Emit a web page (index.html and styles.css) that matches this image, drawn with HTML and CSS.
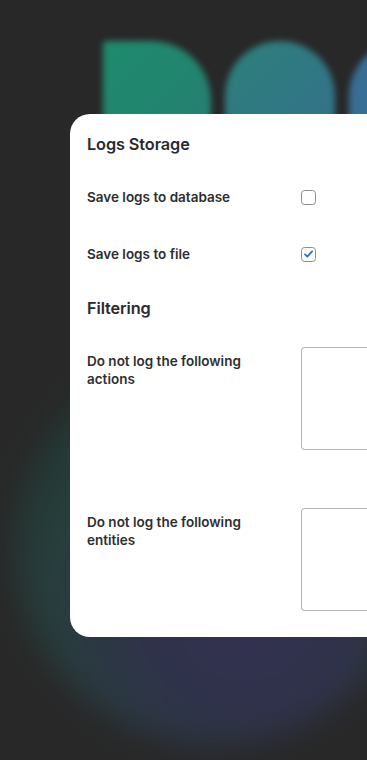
FILE: index.html
```html
<!DOCTYPE html>
<html>
<head>
<meta charset="utf-8">
<link rel="stylesheet" href="styles.css">
</head>
<body>
<div class="bg">
  <div class="shape shape-d"></div>
  <div class="shape shape-c1"></div>
  <div class="shape shape-c2"></div>
  <div class="glow"></div>
</div>
<main class="page">
  <section class="card">
    <h2 class="title">Logs Storage</h2>
    <div class="row row-check first">
      <label class="label">Save logs to database</label>
      <span class="checkbox"></span>
    </div>
    <div class="row row-check second">
      <label class="label">Save logs to file</label>
      <span class="checkbox checked">
        <svg viewBox="0 0 14 14" width="14" height="14"><path d="M3.3 7.4 L5.8 9.8 L10.8 4.2" fill="none" stroke="#2f74c6" stroke-width="2" stroke-linecap="round" stroke-linejoin="round"/></svg>
      </span>
    </div>
    <h2 class="title filtering">Filtering</h2>
    <div class="row row-area first-area">
      <label class="label multi">Do not log the following actions</label>
      <div class="textarea"></div>
    </div>
    <div class="row row-area second-area">
      <label class="label multi">Do not log the following entities</label>
      <div class="textarea"></div>
    </div>
  </section>
</main>
</body>
</html>
```
FILE: styles.css
```css
* { box-sizing: border-box; }
html, body {
  margin: 0;
  padding: 0;
  width: 367px;
  height: 760px;
  overflow: hidden;
  background: #282828;
  font-family: "Inter", "Liberation Sans", Arial, sans-serif;
  color: #2b2b2d;
}
.bg {
  position: absolute;
  inset: 0;
  overflow: hidden;
}
.shape {
  position: absolute;
  top: 41px;
  height: 140px;
  filter: blur(3px);
}
.shape-d {
  left: 103px;
  width: 108px;
  border-radius: 4px 60px 0 0;
  background: linear-gradient(135deg, #1e8b6d 0%, #22846f 50%, #2a7a7a 100%);
}
.shape-c1 {
  left: 225px;
  width: 110px;
  border-radius: 55px 55px 0 0;
  background: linear-gradient(135deg, #2d8078 0%, #317686 55%, #386c93 100%);
}
.shape-c2 {
  left: 349px;
  width: 110px;
  border-radius: 55px 55px 0 0;
  background: linear-gradient(135deg, #376f92 0%, #3b6a98 100%);
}
.glow {
  position: absolute;
  left: 15px;
  top: 345px;
  width: 400px;
  height: 400px;
  border-radius: 50%;
  background: radial-gradient(circle at 58% 66%, #36345a 0%, #31344f 30%, #27423f 58%, #213631 78%, #282828 100%);
  filter: blur(16px);
  opacity: 0.88;
}
.page {
  position: relative;
  padding: 114px 0 0 70px;
  overflow: hidden;
}
.card {
  width: 297px;
  background: #ffffff;
  border-radius: 20px 0 0 20px;
  padding: 19px 0 26px 17px;
}
.title {
  margin: 0;
  font-size: 16.3px;
  line-height: 22px;
  font-weight: 600;
  color: #2a2a2c;
  letter-spacing: -0.1px;
}
.row {
  display: flex;
  align-items: flex-start;
}
.label {
  width: 214px;
  flex: none;
  font-size: 13.5px;
  font-weight: 600;
  line-height: 18px;
  color: #2e2e30;
}
.row-check {
  align-items: center;
  height: 20px;
}
.row-check.first { margin-top: 32px; }
.row-check.second { margin-top: 37px; }
.filtering { margin-top: 33px; }
.checkbox {
  width: 15px;
  height: 15px;
  flex: none;
  border: 1px solid #8e8e92;
  border-radius: 3.5px;
  background: #fff;
  display: flex;
  align-items: center;
  justify-content: center;
}
.checkbox svg { display: block; }
.label.multi {
  padding-top: 5px;
  padding-right: 40px;
}
.first-area { margin-top: 28px; }
.second-area { margin-top: 58px; }
.textarea {
  flex: 1;
  height: 103px;
  border: 1px solid #b5b5b8;
  border-right: none;
  border-radius: 4px 0 0 4px;
  background: #fff;
}
```
